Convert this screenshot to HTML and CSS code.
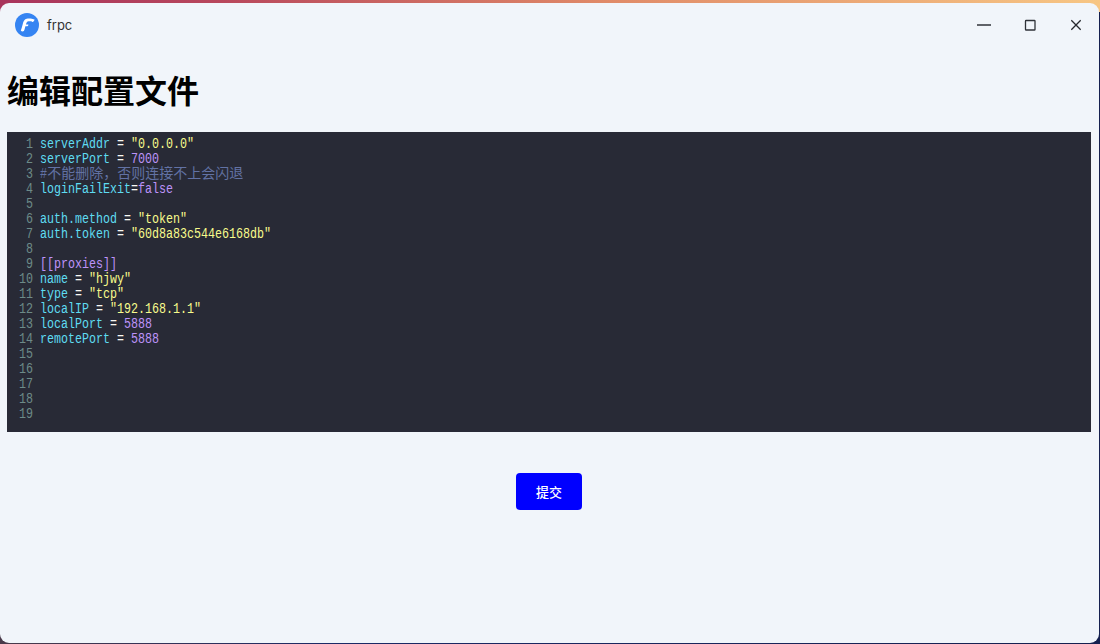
FILE: index.html
```html
<!DOCTYPE html>
<html lang="zh-CN">
<head>
<meta charset="utf-8">
<title>frpc</title>
<link rel="stylesheet" href="styles.css">
</head>
<body>
<div class="window">
  <header class="titlebar">
    <div class="app">
      <svg class="logo" width="24" height="24" viewBox="0 0 24 24" aria-hidden="true">
        <circle cx="12" cy="12" r="12" fill="#3584f2"/>
        <path d="M5.8 17.4 C6.4 18.6 8 18.8 8.8 18 C9.5 17.3 9.8 15.4 10.4 13.2 L12.4 13.2 C13 13.2 13.3 12.6 13.4 11.6 L10.9 11.6 C11.3 9.8 12 8.4 13.6 8.2 L16.4 8.2 C17.4 9.6 18.9 9 19.6 6.6 C18.2 6 14.8 5.4 12.8 5.6 C9.8 5.8 8.4 8.4 7.8 11 C7.3 13 6.6 15.6 5.8 17.4 Z" fill="#fff"/>
      </svg>
      <span class="app-name">frpc</span>
    </div>
    <div class="controls">
      <span class="ctl"><svg width="14" height="14" viewBox="0 0 14 14"><path d="M0 7h14" stroke="#2f3238" stroke-width="1.4" fill="none"/></svg></span>
      <span class="ctl"><svg width="12" height="12" viewBox="0 0 12 12"><rect x="1.5" y="1.5" width="9.5" height="9.5" rx=".6" stroke="#2f3238" stroke-width="1.3" fill="none"/></svg></span>
      <span class="ctl"><svg width="12" height="12" viewBox="0 0 12 12"><path d="M1.3 1.3l9.4 9.4M10.7 1.3l-9.4 9.4" stroke="#25282d" stroke-width="1.3" fill="none"/></svg></span>
    </div>
  </header>
  <main class="content">
    <h1 class="heading">编辑配置文件</h1>
    <div class="editor">
      <ol class="gutter">
        <li>1</li><li>2</li><li>3</li><li>4</li><li>5</li><li>6</li><li>7</li><li>8</li><li>9</li><li>10</li><li>11</li><li>12</li><li>13</li><li>14</li><li>15</li><li>16</li><li>17</li><li>18</li><li>19</li>
      </ol>
      <div class="code">
        <div class="line"><span class="k">serverAddr</span> = <span class="s">"0.0.0.0"</span></div>
        <div class="line"><span class="k">serverPort</span> = <span class="n">7000</span></div>
        <div class="line"><span class="c">#<span class="cjk">不能删除&#65292;否则连接不上会闪退</span></span></div>
        <div class="line"><span class="k">loginFailExit</span>=<span class="n">false</span></div>
        <div class="line"></div>
        <div class="line"><span class="k">auth.method</span> = <span class="s">"token"</span></div>
        <div class="line"><span class="k">auth.token</span> = <span class="s">"60d8a83c544e6168db"</span></div>
        <div class="line"></div>
        <div class="line"><span class="n">[[proxies]]</span></div>
        <div class="line"><span class="k">name</span> = <span class="s">"hjwy"</span></div>
        <div class="line"><span class="k">type</span> = <span class="s">"tcp"</span></div>
        <div class="line"><span class="k">localIP</span> = <span class="s">"192.168.1.1"</span></div>
        <div class="line"><span class="k">localPort</span> = <span class="n">5888</span></div>
        <div class="line"><span class="k">remotePort</span> = <span class="n">5888</span></div>
      </div>
    </div>
    <div class="actions">
      <button class="submit" type="button">提交</button>
    </div>
  </main>
</div>
</body>
</html>
```
FILE: styles.css
```css
* { box-sizing: border-box; }
html, body { height: 100%; }
body {
  margin: 0;
  padding: 3px 1px 1px 0;
  overflow: hidden;
  background:
    linear-gradient(90deg, #a8345c 0%, #b8475c 20%, #e08a68 55%, #f7c684 100%) top / 100% 12px no-repeat,
    linear-gradient(90deg, #4a3a4a 0%, #1c2a66 30%, #15204f 100%);
  font-family: "Noto Sans", "Noto Sans CJK SC", sans-serif;
}
.window {
  height: 100%;
  background: #f1f5fa;
  border-radius: 9px;
  overflow: hidden;
}
.titlebar {
  display: flex;
  justify-content: space-between;
  align-items: center;
  height: 44px;
}
.app {
  display: flex;
  align-items: center;
  gap: 8px;
  padding-left: 15px;
}
.logo { display: block; }
.app-name {
  font-family: "Inter", "Noto Sans", sans-serif;
  font-size: 13px;
  color: #333;
}
.controls { display: flex; height: 100%; }
.ctl {
  display: flex;
  align-items: center;
  justify-content: center;
  width: 46px;
}
.content { padding: 0 8px 0 7px; }
.heading {
  margin: 22px 0 23px;
  font-family: "Noto Sans CJK SC", sans-serif;
  font-size: 32px;
  line-height: 40px;
  font-weight: 700;
  color: #000;
}
.editor {
  display: flex;
  height: 300px;
  padding-top: 5px;
  background: #282a36;
  font-family: "Liberation Mono", "Noto Sans CJK SC", monospace;
  font-size: 14px;
  line-height: 15px;
  color: #f8f8f2;
}
/* Latin glyphs are 14px tall on a 7px advance: squeeze the mono face to that ratio */
.gutter {
  flex: none;
  list-style: none;
  margin: 0;
  padding: 0;
  width: 31.2px;
  margin-right: -5.2px;
  text-align: right;
  color: #6d8a88;
  transform: scaleX(0.8333);
  transform-origin: left top;
}
.gutter li { height: 15px; }
.code {
  padding-left: 8.4px;
  transform: scaleX(0.8333);
  transform-origin: left top;
}
.line { height: 15px; white-space: pre; }
.k { color: #5fdcf2; }
.s { color: #f8fb8c; }
.n { color: #bd93f9; }
.c { color: #6272a4; }
.cjk {
  display: inline-block;
  height: 15px;
  margin-top: -2px;
  vertical-align: top;
  font-family: "Noto Sans CJK SC", sans-serif;
  font-size: 14px;
  line-height: 15px;
  transform: scaleX(1.2);
  transform-origin: left top;
}
.actions {
  display: flex;
  justify-content: center;
  padding-top: 41px;
}
.submit {
  width: 66px;
  height: 37px;
  border: 0;
  border-radius: 4px;
  background: #0000ff;
  color: #fff;
  font-family: "Noto Sans CJK SC", sans-serif;
  font-size: 13px;
  font-weight: 500;
}
```
